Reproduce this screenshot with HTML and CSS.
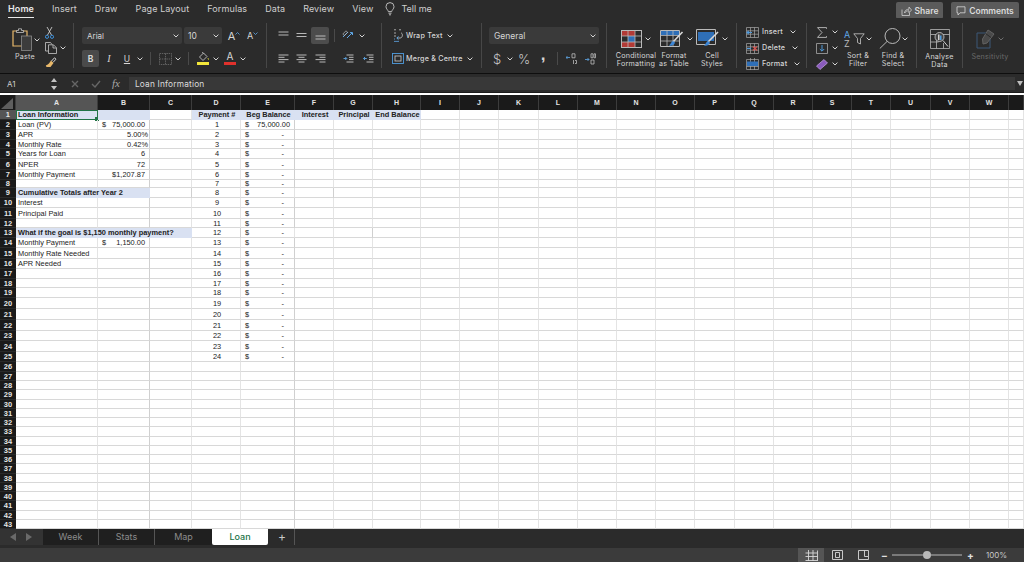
FILE: index.html
```html
<!DOCTYPE html>
<html lang="en">
<head>
<meta charset="utf-8">
<title>Loan</title>
<link rel="stylesheet" href="styles.css">
</head>
<body>
<svg class="defs" aria-hidden="true"><symbol id="chev" viewBox="0 0 6 4"><path d="M.6.6 3 3 5.4.6" fill="none" stroke="#d4d4d4" stroke-width="1"/></symbol></svg>

<header class="tabs">
  <nav class="tablist">
    <a class="tab on">Home</a><a class="tab">Insert</a><a class="tab">Draw</a><a class="tab">Page Layout</a><a class="tab">Formulas</a><a class="tab">Data</a><a class="tab">Review</a><a class="tab">View</a>
    <a class="tell"><svg width="10" height="14" viewBox="0 0 10 14" fill="none" stroke="#c8c8c8" stroke-width=".9"><path d="M3.3 9.6C3 7.8 1 7 1 4.6a4 4 0 0 1 8 0c0 2.400-2 3.200-2.300 5zM3.500 11.200h3M4 12.800h2"/></svg><span>Tell me</span></a>
  </nav>
  <div class="actions">
    <button class="act share"><svg width="11" height="10" viewBox="0 0 11 10" fill="none" stroke="#cfcfcf" stroke-width=".8"><path d="M1 3.500v6h7.500V7M3.500 7c.3-2.500 2-3.800 4.500-3.800V1l2.500 3-2.500 2.800V4.800C6 4.800 4.500 5.500 3.500 7z"/></svg>Share</button>
    <button class="act comments"><svg width="10" height="10" viewBox="0 0 10 10" fill="none" stroke="#d8d8d8" stroke-width=".8"><path d="M1 .8h8v6H4L2 9V6.800H1z"/></svg>Comments</button>
  </div>
</header>

<section class="ribbon">
  <div class="group g-clip">
    <div class="paste">
      <div class="paste-top">
        <svg width="20" height="23" viewBox="0 0 20 23" fill="none"><path d="M5 3H1v15h14" stroke="#e8b86a" stroke-width="1.200"/><path d="M11 3h4v5" stroke="#e8b86a" stroke-width="1.200"/><path d="M4.500 4.500V2.500H6.500V.8h3v1.700h2v2z" stroke="#c4c4c4" stroke-width=".8" fill="#2b2b2b"/><rect x="9.500" y="8" width="10" height="14.500" fill="#3c3c3c" stroke="#8a8a8a" stroke-width=".8"/></svg>
        <svg class="chev" viewBox="0 0 6 4"><use href="#chev"/></svg>
      </div>
      <span class="lbl">Paste</span>
    </div>
    <div class="clip-col">
      <div class="clip-row"><svg width="9" height="12" viewBox="0 0 9 12" fill="none"><path d="M2 0l4.500 8M7 0 2.500 8" stroke="#e0e0e0" stroke-width=".8"/><circle cx="2" cy="9.800" r="1.600" stroke="#3f8fd6"/><circle cx="7" cy="9.800" r="1.600" stroke="#3f8fd6"/></svg></div>
      <div class="clip-row"><svg width="12" height="12" viewBox="0 0 12 12" fill="none" stroke="#c8c8c8" stroke-width=".8"><path d="M3.500 9H.5V.5h5L7 2.500"/><path d="M3.500 2.800h5l3 3v5.700h-8zM8 3v3h3.300"/></svg><svg class="chev" viewBox="0 0 6 4"><use href="#chev"/></svg></div>
      <div class="clip-row"><svg width="12" height="11" viewBox="0 0 12 11" fill="none"><path d="M6.500 4 9.500.8l1.500 1.400-3 3.200" stroke="#d8d8d8"/><path d="M6 3.500 8.500 6 5.500 10H1.500L.8 8.500C3 8 4.500 6 6 3.500z" fill="#e8b86a"/></svg></div>
    </div>
  </div>

  <div class="group g-font">
    <div class="row">
      <div class="select w100"><span>Arial</span><svg class="chev" viewBox="0 0 6 4"><use href="#chev"/></svg></div>
      <div class="select w38"><span class="big">10</span><svg class="chev" viewBox="0 0 6 4"><use href="#chev"/></svg></div>
      <div class="tool w20 grow-a">A<svg class="tip" width="5" height="3" viewBox="0 0 5 3" fill="none" stroke="#5fa8e8" stroke-width=".8"><path d="M.5 2.500 2.500.5l2 2"/></svg></div>
      <div class="tool w17 shrink-a">A<svg class="tip" width="5" height="3" viewBox="0 0 5 3" fill="none" stroke="#5fa8e8" stroke-width=".8"><path d="M.5.5l2 2 2-2"/></svg></div>
    </div>
    <div class="row">
      <div class="tool w17 bold-b">B</div>
      <div class="tool w20 ital">I</div>
      <div class="tool w16 under">U</div>
      <div class="tool w10"><svg class="chev" viewBox="0 0 6 4"><use href="#chev"/></svg></div>
      <div class="tool w10"><i class="vsep"></i></div>
      <div class="tool w20"><svg width="13" height="12" viewBox="0 0 13 12" fill="none" stroke="#6e6e6e" stroke-width=".8" stroke-dasharray="1.500 .8"><path d="M.5.500h12v11H.5zM6.500.500v11M.5 6h12"/></svg></div>
      <div class="tool w6"><svg class="chev" viewBox="0 0 6 4"><use href="#chev"/></svg></div>
      <div class="tool w14"><i class="vsep"></i></div>
      <div class="tool w16 stack"><svg width="11" height="9" viewBox="0 0 11 9" fill="none" stroke="#d4d4d4" stroke-width=".8"><path d="M1.500 5 5.500 1 9 4.500 5 8.500zM5.500 1 4 0"/><path d="M9.800 6c.6.9.9 1.300.9 1.800" stroke="#e9e23a"/></svg><i class="bar yellow"></i></div>
      <div class="tool w10"><svg class="chev" viewBox="0 0 6 4"><use href="#chev"/></svg></div>
      <div class="tool w18 stack"><span class="font-a">A</span><i class="bar red"></i></div>
      <div class="tool w8"><svg class="chev" viewBox="0 0 6 4"><use href="#chev"/></svg></div>
    </div>
  </div>

  <div class="group g-align">
    <div class="row">
      <div class="tool w18"><svg class="al" viewBox="0 0 11 9"><path d="M.5 1h10M.5 4h10"/></svg></div>
      <div class="tool w18"><svg class="al" viewBox="0 0 11 9"><path d="M.5 2.500h10M.5 5.500h10"/></svg></div>
      <div class="tool w20"><span class="hl"><svg class="al" viewBox="0 0 11 9"><path d="M.5 5h10M.5 8h10"/></svg></span></div>
      <div class="tool w8"><i class="vsep"></i></div>
      <div class="tool w20"><svg width="12" height="11" viewBox="0 0 12 11" fill="none"><path d="M1 7 6 2" stroke="#5fa8e8"/><path d="M5 8l5-5M10.500 2.500 8 2.600M10.500 2.500V5" stroke="#5fa8e8"/><path d="M.8 4 4 .8l1.500 1.500L2.300 5.500z" stroke="#bdbdbd" stroke-width=".7"/></svg></div>
      <div class="tool w8"><svg class="chev" viewBox="0 0 6 4"><use href="#chev"/></svg></div>
    </div>
    <div class="row">
      <div class="tool w18"><svg class="al" viewBox="0 0 11 9"><path d="M.5 1h10M.5 3.300h6M.5 5.600h10M.5 8h6"/></svg></div>
      <div class="tool w18"><svg class="al" viewBox="0 0 11 9"><path d="M.5 1h10M2.500 3.300h6M.5 5.600h10M2.500 8h6"/></svg></div>
      <div class="tool w20"><svg class="al" viewBox="0 0 11 9"><path d="M.5 1h10M4.500 3.300h6M.5 5.600h10M4.500 8h6"/></svg></div>
      <div class="tool w8"></div>
      <div class="tool w20"><svg class="al" viewBox="0 0 11 9"><path d="M3.500 1h7M6 3.300h4.500M6 5.600h4.500M3.500 8h7"/><path d="M.5 4.500h3M2.300 3 3.800 4.500 2.300 6" stroke="#5fa8e8"/></svg></div>
      <div class="tool w20"><svg class="al" viewBox="0 0 11 9"><path d="M3.500 1h7M6 3.300h4.500M6 5.600h4.500M3.500 8h7"/><path d="M3.800 4.500h-3M2 3 .5 4.500 2 6" stroke="#5fa8e8"/></svg></div>
    </div>
  </div>

  <div class="group g-wrap">
    <div class="row">
      <div class="tool w16"><svg width="11" height="13" viewBox="0 0 11 13" fill="none" stroke="#c8c8c8" stroke-width=".8"><path d="M3 .8 1 .8M3 4H1M3 7H1M6 .8h2M8 4c2 0 2 5-1 5H4" /><path d="M5.500 7.500 3.800 9l1.700 1.700" stroke="#5fa8e8" stroke-width="1"/><path d="M1 10h1M1 12.400h5" stroke="#5fa8e8"/></svg></div>
      <span class="lbl mini">Wrap Text</span><svg class="chev tight" viewBox="0 0 6 4"><use href="#chev"/></svg>
    </div>
    <div class="row">
      <div class="tool w16"><svg width="12" height="11" viewBox="0 0 12 11" fill="none" stroke="#4f9bdc" stroke-width=".9"><rect x=".5" y=".5" width="11" height="10"/><rect x="3" y="3" width="6" height="5" stroke="#bdbdbd"/></svg></div>
      <span class="lbl mini">Merge &amp; Centre</span><svg class="chev tight" viewBox="0 0 6 4"><use href="#chev"/></svg>
    </div>
  </div>

  <div class="group g-num">
    <div class="row">
      <div class="select w110"><span class="big">General</span><svg class="chev" viewBox="0 0 6 4"><use href="#chev"/></svg></div>
    </div>
    <div class="row">
      <div class="tool w16 sym">$</div>
      <div class="tool w10"><svg class="chev" viewBox="0 0 6 4"><use href="#chev"/></svg></div>
      <div class="tool w18 sym">%</div>
      <div class="tool w20 sym comma">,</div>
      <div class="tool w8"><i class="vsep"></i></div>
      <div class="tool w20"><svg width="11" height="12" viewBox="0 0 11 12" fill="none" stroke="#bdbdbd" stroke-width=".8"><path d="M0 4.500h4M1.500 3 0 4.500 1.500 6" stroke="#5fa8e8"/><path d="M6 .8h3v4H6zM7.500 7v4M9 7.500h1.500v3H9"/></svg></div>
      <div class="tool w18"><svg width="11" height="12" viewBox="0 0 11 12" fill="none" stroke="#bdbdbd" stroke-width=".8"><path d="M0 6.500h4M2.500 5 4 6.500 2.500 8" stroke="#5fa8e8"/><path d="M6 .8h2v4H6zM9 .8h1.500v4H9zM6 7h3v4H6z"/></svg></div>
    </div>
  </div>

  <div class="group g-styles">
    <div class="big-item">
      <div class="big-ic"><svg width="21" height="18" viewBox="0 0 21 18"><rect x=".5" y=".5" width="20" height="17" fill="none" stroke="#b9b9b9"/><path d="M1 1h13v5H1zM1 12h13v5H1z" fill="#b23a36"/><path d="M7 6h7v6H7z" fill="#2f6fb7"/><path d="M7 .5v17M14 .5v17M.5 6h20M.5 12h20" stroke="#b9b9b9" stroke-width=".8"/></svg><svg class="chev" viewBox="0 0 6 4"><use href="#chev"/></svg></div>
      <span class="lbl">Conditional</span><span class="lbl">Formatting</span>
    </div>
    <div class="big-item">
      <div class="big-ic nudge"><svg width="24" height="18" viewBox="0 0 24 18"><path d="M.5.5h19v16H.5z" fill="none" stroke="#b9b9b9"/><path d="M1 1h18v4H1z" fill="#2f6fb7"/><path d="M7 .5v16M13 .5v16M.5 5.500h19M.5 11h19" stroke="#b9b9b9" stroke-width=".8"/><path d="M22.500 2 13 12" stroke="#d8d8d8" stroke-width="1.600"/><path d="M13 11c-2 .5-2 3-4 4.500 3 .8 5.500-.5 6-3z" fill="#3c86d6"/></svg><svg class="chev" viewBox="0 0 6 4"><use href="#chev"/></svg></div>
      <span class="lbl">Format</span><span class="lbl">as Table</span>
    </div>
    <div class="big-item">
      <div class="big-ic"><svg width="23" height="19" viewBox="0 0 23 19"><path d="M.5.5h19v15H.5z" fill="none" stroke="#b9b9b9"/><path d="M2 3h16v9H2z" fill="#2f6fb7"/><path d="M22 3 12 13" stroke="#d8d8d8" stroke-width="1.600"/><path d="M12 12c-2 .5-2 3-4 4.500 3 .8 5.500-.5 6-3z" fill="#3c86d6"/></svg><svg class="chev" viewBox="0 0 6 4"><use href="#chev"/></svg></div>
      <span class="lbl">Cell</span><span class="lbl">Styles</span>
    </div>
  </div>

  <div class="group g-cells">
    <div class="line"><svg width="13" height="11" viewBox="0 0 13 11" fill="none"><path d="M.5.500h12v10H.5zM4.500.500v10M8.500.500v10M.5 3.800h12M.5 7.200h12" stroke="#a8a8a8" stroke-width=".7"/><path d="M1 5.500h5M2.800 3.800 1 5.500l1.800 1.700" stroke="#4f9bdc" stroke-width="1.100"/></svg><span class="lbl mini">Insert</span><svg class="chev" viewBox="0 0 6 4"><use href="#chev"/></svg></div>
    <div class="line"><svg width="13" height="11" viewBox="0 0 13 11" fill="none"><path d="M.5.500h12v10H.5zM4.500.500v10M8.500.500v10M.5 3.800h12M.5 7.200h12" stroke="#a8a8a8" stroke-width=".7"/><path d="M7 3.500l4 4M11 3.500l-4 4" stroke="#d9534f" stroke-width="1.100"/><path d="M1 5.500h4" stroke="#4f9bdc" stroke-width="1.100"/></svg><span class="lbl mini">Delete</span><svg class="chev" viewBox="0 0 6 4"><use href="#chev"/></svg></div>
    <div class="line"><svg width="13" height="12" viewBox="0 0 13 12" fill="none"><path d="M.5 1.500h12v10H.5zM4.500 0v12M8.500 0v12M.5 8.500h12" stroke="#a8a8a8" stroke-width=".7"/><path d="M1 3.500h11v4.500H1z" fill="#2f6fb7"/></svg><span class="lbl mini">Format</span><svg class="chev" viewBox="0 0 6 4"><use href="#chev"/></svg></div>
  </div>

  <div class="group g-edit">
    <div class="edit-col">
      <div class="line"><svg width="11" height="11" viewBox="0 0 11 11" fill="none" stroke="#bdbdbd" stroke-width=".9"><path d="M10 1.800V.6H1l4.500 4.900L1 10.400h9V9.200"/></svg><svg class="chev" viewBox="0 0 6 4"><use href="#chev"/></svg></div>
      <div class="line"><svg width="12" height="11" viewBox="0 0 12 11" fill="none"><path d="M.5.500h11v10H.5z" stroke="#a8a8a8" stroke-width=".8"/><path d="M6 2v6M3.800 6 6 8.200 8.200 6" stroke="#4f9bdc"/></svg><svg class="chev" viewBox="0 0 6 4"><use href="#chev"/></svg></div>
      <div class="line"><svg width="12" height="11" viewBox="0 0 12 11"><path d="M8 .5 11.500 4 4 10.500.5 7z" fill="#8a5bbd" stroke="#c9a8e8" stroke-width=".7"/></svg><svg class="chev" viewBox="0 0 6 4"><use href="#chev"/></svg></div>
    </div>
    <div class="big-item w34">
      <div class="big-ic"><span class="az"><b>A</b><span>Z</span></span><svg width="12" height="12" viewBox="0 0 12 12" fill="none" stroke="#c8c8c8" stroke-width=".8"><path d="M.8.800h10.400L7.500 5.500V11l-3-1.500v-4z"/></svg><svg class="chev" viewBox="0 0 6 4"><use href="#chev"/></svg></div>
      <span class="lbl">Sort &amp;</span><span class="lbl">Filter</span>
    </div>
    <div class="big-item w34">
      <div class="big-ic"><svg width="22" height="21" viewBox="0 0 22 21" fill="none" stroke="#c8c8c8" stroke-width=".9"><circle cx="13.500" cy="8" r="7.500"/><path d="M8 13.500.8 20.500"/></svg><svg class="chev" viewBox="0 0 6 4"><use href="#chev"/></svg></div>
      <span class="lbl">Find &amp;</span><span class="lbl">Select</span>
    </div>
  </div>

  <div class="group g-analyse">
    <div class="big-item">
      <div class="big-ic"><svg width="20" height="20" viewBox="0 0 20 20" fill="none"><path d="M.5.500h19v19H.5zM.5 5.500h19M6.500 5.500v14M13.500 14v5.500M.5 13h8" stroke="#b9b9b9" stroke-width=".8"/><circle cx="9.500" cy="8" r="4.500" fill="#444" stroke="#d0d0d0" stroke-width=".8"/><path d="M8 5.500h1.500V11H8z" fill="#d0d0d0"/><path d="M10 6.500h1.500V11H10z" fill="#4f9bdc"/><path d="m13 11.500 5 6" stroke="#d0d0d0"/></svg></div>
      <span class="lbl">Analyse</span><span class="lbl">Data</span>
    </div>
  </div>

  <div class="group g-sens">
    <div class="big-item">
      <div class="big-ic"><svg width="19" height="20" viewBox="0 0 19 20" fill="none"><path d="M11 4H1v15h13v-9" stroke="#3c5878"/><path d="M12 1l6 4-7 9-4 1-.5-5z" fill="#4a4a4a" stroke="#636363"/><path d="M9.500 4.500l5.500 4" stroke="#2b2b2b"/></svg><svg class="chev dim" viewBox="0 0 6 4"><use href="#chev"/></svg></div>
      <span class="lbl muted">Sensitivity</span>
    </div>
  </div>
</section>

<section class="formula">
  <div class="namebox">A1</div>
  <div class="stepper"><svg width="6" height="12" viewBox="0 0 6 12" fill="#c4c4c4"><path d="M3 0l3 4H0zM3 12 0 8h6z"/></svg></div>
  <div class="fbtn x"><svg width="8" height="8" viewBox="0 0 8 8" stroke="#666" stroke-width="1.400"><path d="M1 1l6 6M7 1 1 7"/></svg></div>
  <div class="fbtn"><svg width="10" height="8" viewBox="0 0 10 8" fill="none" stroke="#666" stroke-width="1.400"><path d="M1 4l3 3 5-6"/></svg></div>
  <div class="fx">fx</div>
  <div class="finput">Loan Information</div>
  <div class="fdrop"><svg width="6" height="5" viewBox="0 0 6 5" fill="#bdbdbd"><path d="M0 0h6L3 5z"/></svg></div>
</section>

<main class="sheet">
<table class="grid">
<colgroup><col class="c16"><col class="c82"><col class="c52"><col class="c42"><col class="c49"><col class="c54"><col class="c39"><col class="c39"><col class="c48"><col class="c39"><col class="c39"><col class="c40"><col class="c39"><col class="c39"><col class="c39"><col class="c39"><col class="c40"><col class="c39"><col class="c39"><col class="c39"><col class="c39"><col class="c40"><col class="c39"><col class="c39"><col class="c15"></colgroup>
<thead><tr><th class="corner"><svg width="14" height="13" viewBox="0 0 14 13"><path d="M13 1v11H1z" fill="#5e5e5e"/></svg></th><th class="cur">A</th><th>B</th><th>C</th><th>D</th><th>E</th><th>F</th><th>G</th><th>H</th><th>I</th><th>J</th><th>K</th><th>L</th><th>M</th><th>N</th><th>O</th><th>P</th><th>Q</th><th>R</th><th>S</th><th>T</th><th>U</th><th>V</th><th>W</th><th></th></tr></thead>
<tbody>
<tr class="h10"><th class="cur">1</th><td class="sel hd b">Loan Information</td><td class="hd"></td><td></td><td class="hd b ctr">Payment #</td><td class="hd b ctr">Beg Balance</td><td class="hd b ctr">Interest</td><td class="hd b ctr">Principal</td><td class="hd b ctr">End Balance</td><td></td><td></td><td></td><td></td><td></td><td></td><td></td><td></td><td></td><td></td><td></td><td></td><td></td><td></td><td></td><td></td></tr>
<tr class="h10"><th>2</th><td>Loan (PV)</td><td class="num"><span class="dl">$</span>75,000.00</td><td></td><td class="ctr">1</td><td class="num"><span class="dl">$</span>75,000.00</td><td></td><td></td><td></td><td></td><td></td><td></td><td></td><td></td><td></td><td></td><td></td><td></td><td></td><td></td><td></td><td></td><td></td><td></td><td></td></tr>
<tr class="h10"><th>3</th><td>APR</td><td class="pct">5.00%</td><td></td><td class="ctr">2</td><td class="num"><span class="dl">$</span><span class="dash">-</span></td><td></td><td></td><td></td><td></td><td></td><td></td><td></td><td></td><td></td><td></td><td></td><td></td><td></td><td></td><td></td><td></td><td></td><td></td><td></td></tr>
<tr class="h9"><th>4</th><td>Monthly Rate</td><td class="pct">0.42%</td><td></td><td class="ctr">3</td><td class="num"><span class="dl">$</span><span class="dash">-</span></td><td></td><td></td><td></td><td></td><td></td><td></td><td></td><td></td><td></td><td></td><td></td><td></td><td></td><td></td><td></td><td></td><td></td><td></td><td></td></tr>
<tr class="h10"><th>5</th><td>Years for Loan</td><td class="num">6</td><td></td><td class="ctr">4</td><td class="num"><span class="dl">$</span><span class="dash">-</span></td><td></td><td></td><td></td><td></td><td></td><td></td><td></td><td></td><td></td><td></td><td></td><td></td><td></td><td></td><td></td><td></td><td></td><td></td><td></td></tr>
<tr class="h11"><th>6</th><td>NPER</td><td class="num">72</td><td></td><td class="ctr">5</td><td class="num"><span class="dl">$</span><span class="dash">-</span></td><td></td><td></td><td></td><td></td><td></td><td></td><td></td><td></td><td></td><td></td><td></td><td></td><td></td><td></td><td></td><td></td><td></td><td></td><td></td></tr>
<tr class="h10"><th>7</th><td>Monthly Payment</td><td class="num">$1,207.87</td><td></td><td class="ctr">6</td><td class="num"><span class="dl">$</span><span class="dash">-</span></td><td></td><td></td><td></td><td></td><td></td><td></td><td></td><td></td><td></td><td></td><td></td><td></td><td></td><td></td><td></td><td></td><td></td><td></td><td></td></tr>
<tr class="h8"><th>8</th><td></td><td></td><td></td><td class="ctr">7</td><td class="num"><span class="dl">$</span><span class="dash">-</span></td><td></td><td></td><td></td><td></td><td></td><td></td><td></td><td></td><td></td><td></td><td></td><td></td><td></td><td></td><td></td><td></td><td></td><td></td><td></td></tr>
<tr class="h10"><th>9</th><td class="hd b" colspan="2">Cumulative Totals after Year 2</td><td></td><td class="ctr">8</td><td class="num"><span class="dl">$</span><span class="dash">-</span></td><td></td><td></td><td></td><td></td><td></td><td></td><td></td><td></td><td></td><td></td><td></td><td></td><td></td><td></td><td></td><td></td><td></td><td></td><td></td></tr>
<tr class="h10"><th>10</th><td>Interest</td><td></td><td></td><td class="ctr">9</td><td class="num"><span class="dl">$</span><span class="dash">-</span></td><td></td><td></td><td></td><td></td><td></td><td></td><td></td><td></td><td></td><td></td><td></td><td></td><td></td><td></td><td></td><td></td><td></td><td></td><td></td></tr>
<tr class="h11"><th>11</th><td>Principal Paid</td><td></td><td></td><td class="ctr">10</td><td class="num"><span class="dl">$</span><span class="dash">-</span></td><td></td><td></td><td></td><td></td><td></td><td></td><td></td><td></td><td></td><td></td><td></td><td></td><td></td><td></td><td></td><td></td><td></td><td></td><td></td></tr>
<tr class="h9"><th>12</th><td></td><td></td><td></td><td class="ctr">11</td><td class="num"><span class="dl">$</span><span class="dash">-</span></td><td></td><td></td><td></td><td></td><td></td><td></td><td></td><td></td><td></td><td></td><td></td><td></td><td></td><td></td><td></td><td></td><td></td><td></td><td></td></tr>
<tr class="h10"><th>13</th><td class="hd b" colspan="3">What if the goal is $1,150 monthly payment?</td><td class="ctr">12</td><td class="num"><span class="dl">$</span><span class="dash">-</span></td><td></td><td></td><td></td><td></td><td></td><td></td><td></td><td></td><td></td><td></td><td></td><td></td><td></td><td></td><td></td><td></td><td></td><td></td><td></td></tr>
<tr class="h10"><th>14</th><td>Monthly Payment</td><td class="num"><span class="dl">$</span>1,150.00</td><td></td><td class="ctr">13</td><td class="num"><span class="dl">$</span><span class="dash">-</span></td><td></td><td></td><td></td><td></td><td></td><td></td><td></td><td></td><td></td><td></td><td></td><td></td><td></td><td></td><td></td><td></td><td></td><td></td><td></td></tr>
<tr class="h11"><th>15</th><td>Monthly Rate Needed</td><td></td><td></td><td class="ctr">14</td><td class="num"><span class="dl">$</span><span class="dash">-</span></td><td></td><td></td><td></td><td></td><td></td><td></td><td></td><td></td><td></td><td></td><td></td><td></td><td></td><td></td><td></td><td></td><td></td><td></td><td></td></tr>
<tr class="h10"><th>16</th><td>APR Needed</td><td></td><td></td><td class="ctr">15</td><td class="num"><span class="dl">$</span><span class="dash">-</span></td><td></td><td></td><td></td><td></td><td></td><td></td><td></td><td></td><td></td><td></td><td></td><td></td><td></td><td></td><td></td><td></td><td></td><td></td><td></td></tr>
<tr class="h10"><th>17</th><td></td><td></td><td></td><td class="ctr">16</td><td class="num"><span class="dl">$</span><span class="dash">-</span></td><td></td><td></td><td></td><td></td><td></td><td></td><td></td><td></td><td></td><td></td><td></td><td></td><td></td><td></td><td></td><td></td><td></td><td></td><td></td></tr>
<tr class="h9"><th>18</th><td></td><td></td><td></td><td class="ctr">17</td><td class="num"><span class="dl">$</span><span class="dash">-</span></td><td></td><td></td><td></td><td></td><td></td><td></td><td></td><td></td><td></td><td></td><td></td><td></td><td></td><td></td><td></td><td></td><td></td><td></td><td></td></tr>
<tr class="h10"><th>19</th><td></td><td></td><td></td><td class="ctr">18</td><td class="num"><span class="dl">$</span><span class="dash">-</span></td><td></td><td></td><td></td><td></td><td></td><td></td><td></td><td></td><td></td><td></td><td></td><td></td><td></td><td></td><td></td><td></td><td></td><td></td><td></td></tr>
<tr class="h11"><th>20</th><td></td><td></td><td></td><td class="ctr">19</td><td class="num"><span class="dl">$</span><span class="dash">-</span></td><td></td><td></td><td></td><td></td><td></td><td></td><td></td><td></td><td></td><td></td><td></td><td></td><td></td><td></td><td></td><td></td><td></td><td></td><td></td></tr>
<tr class="h11"><th>21</th><td></td><td></td><td></td><td class="ctr">20</td><td class="num"><span class="dl">$</span><span class="dash">-</span></td><td></td><td></td><td></td><td></td><td></td><td></td><td></td><td></td><td></td><td></td><td></td><td></td><td></td><td></td><td></td><td></td><td></td><td></td><td></td></tr>
<tr class="h11"><th>22</th><td></td><td></td><td></td><td class="ctr">21</td><td class="num"><span class="dl">$</span><span class="dash">-</span></td><td></td><td></td><td></td><td></td><td></td><td></td><td></td><td></td><td></td><td></td><td></td><td></td><td></td><td></td><td></td><td></td><td></td><td></td><td></td></tr>
<tr class="h10"><th>23</th><td></td><td></td><td></td><td class="ctr">22</td><td class="num"><span class="dl">$</span><span class="dash">-</span></td><td></td><td></td><td></td><td></td><td></td><td></td><td></td><td></td><td></td><td></td><td></td><td></td><td></td><td></td><td></td><td></td><td></td><td></td><td></td></tr>
<tr class="h11"><th>24</th><td></td><td></td><td></td><td class="ctr">23</td><td class="num"><span class="dl">$</span><span class="dash">-</span></td><td></td><td></td><td></td><td></td><td></td><td></td><td></td><td></td><td></td><td></td><td></td><td></td><td></td><td></td><td></td><td></td><td></td><td></td><td></td></tr>
<tr class="h10"><th>25</th><td></td><td></td><td></td><td class="ctr">24</td><td class="num"><span class="dl">$</span><span class="dash">-</span></td><td></td><td></td><td></td><td></td><td></td><td></td><td></td><td></td><td></td><td></td><td></td><td></td><td></td><td></td><td></td><td></td><td></td><td></td><td></td></tr>
<tr class="h10"><th>26</th><td></td><td></td><td></td><td></td><td></td><td></td><td></td><td></td><td></td><td></td><td></td><td></td><td></td><td></td><td></td><td></td><td></td><td></td><td></td><td></td><td></td><td></td><td></td><td></td></tr>
<tr class="h9"><th>27</th><td></td><td></td><td></td><td></td><td></td><td></td><td></td><td></td><td></td><td></td><td></td><td></td><td></td><td></td><td></td><td></td><td></td><td></td><td></td><td></td><td></td><td></td><td></td><td></td></tr>
<tr class="h9"><th>28</th><td></td><td></td><td></td><td></td><td></td><td></td><td></td><td></td><td></td><td></td><td></td><td></td><td></td><td></td><td></td><td></td><td></td><td></td><td></td><td></td><td></td><td></td><td></td><td></td></tr>
<tr class="h10"><th>29</th><td></td><td></td><td></td><td></td><td></td><td></td><td></td><td></td><td></td><td></td><td></td><td></td><td></td><td></td><td></td><td></td><td></td><td></td><td></td><td></td><td></td><td></td><td></td><td></td></tr>
<tr class="h9"><th>30</th><td></td><td></td><td></td><td></td><td></td><td></td><td></td><td></td><td></td><td></td><td></td><td></td><td></td><td></td><td></td><td></td><td></td><td></td><td></td><td></td><td></td><td></td><td></td><td></td></tr>
<tr class="h9"><th>31</th><td></td><td></td><td></td><td></td><td></td><td></td><td></td><td></td><td></td><td></td><td></td><td></td><td></td><td></td><td></td><td></td><td></td><td></td><td></td><td></td><td></td><td></td><td></td><td></td></tr>
<tr class="h9"><th>32</th><td></td><td></td><td></td><td></td><td></td><td></td><td></td><td></td><td></td><td></td><td></td><td></td><td></td><td></td><td></td><td></td><td></td><td></td><td></td><td></td><td></td><td></td><td></td><td></td></tr>
<tr class="h10"><th>33</th><td></td><td></td><td></td><td></td><td></td><td></td><td></td><td></td><td></td><td></td><td></td><td></td><td></td><td></td><td></td><td></td><td></td><td></td><td></td><td></td><td></td><td></td><td></td><td></td></tr>
<tr class="h9"><th>34</th><td></td><td></td><td></td><td></td><td></td><td></td><td></td><td></td><td></td><td></td><td></td><td></td><td></td><td></td><td></td><td></td><td></td><td></td><td></td><td></td><td></td><td></td><td></td><td></td></tr>
<tr class="h9"><th>35</th><td></td><td></td><td></td><td></td><td></td><td></td><td></td><td></td><td></td><td></td><td></td><td></td><td></td><td></td><td></td><td></td><td></td><td></td><td></td><td></td><td></td><td></td><td></td><td></td></tr>
<tr class="h9"><th>36</th><td></td><td></td><td></td><td></td><td></td><td></td><td></td><td></td><td></td><td></td><td></td><td></td><td></td><td></td><td></td><td></td><td></td><td></td><td></td><td></td><td></td><td></td><td></td><td></td></tr>
<tr class="h10"><th>37</th><td></td><td></td><td></td><td></td><td></td><td></td><td></td><td></td><td></td><td></td><td></td><td></td><td></td><td></td><td></td><td></td><td></td><td></td><td></td><td></td><td></td><td></td><td></td><td></td></tr>
<tr class="h9"><th>38</th><td></td><td></td><td></td><td></td><td></td><td></td><td></td><td></td><td></td><td></td><td></td><td></td><td></td><td></td><td></td><td></td><td></td><td></td><td></td><td></td><td></td><td></td><td></td><td></td></tr>
<tr class="h9"><th>39</th><td></td><td></td><td></td><td></td><td></td><td></td><td></td><td></td><td></td><td></td><td></td><td></td><td></td><td></td><td></td><td></td><td></td><td></td><td></td><td></td><td></td><td></td><td></td><td></td></tr>
<tr class="h9"><th>40</th><td></td><td></td><td></td><td></td><td></td><td></td><td></td><td></td><td></td><td></td><td></td><td></td><td></td><td></td><td></td><td></td><td></td><td></td><td></td><td></td><td></td><td></td><td></td><td></td></tr>
<tr class="h10"><th>41</th><td></td><td></td><td></td><td></td><td></td><td></td><td></td><td></td><td></td><td></td><td></td><td></td><td></td><td></td><td></td><td></td><td></td><td></td><td></td><td></td><td></td><td></td><td></td><td></td></tr>
<tr class="h9"><th>42</th><td></td><td></td><td></td><td></td><td></td><td></td><td></td><td></td><td></td><td></td><td></td><td></td><td></td><td></td><td></td><td></td><td></td><td></td><td></td><td></td><td></td><td></td><td></td><td></td></tr>
<tr class="h9"><th>43</th><td></td><td></td><td></td><td></td><td></td><td></td><td></td><td></td><td></td><td></td><td></td><td></td><td></td><td></td><td></td><td></td><td></td><td></td><td></td><td></td><td></td><td></td><td></td><td></td></tr>
</tbody>
</table>
</main>

<section class="sheetbar">
  <div class="sheetnav"><svg width="6" height="8" viewBox="0 0 6 8" fill="#6a6a6a"><path d="M6 0v8L0 4z"/></svg><svg width="6" height="8" viewBox="0 0 6 8" fill="#6a6a6a"><path d="M0 0v8l6-4z"/></svg></div>
  <div class="stab">Week</div><div class="stab">Stats</div><div class="stab">Map</div><div class="stab active">Loan</div><div class="stab add">+</div>
</section>

<footer class="status">
  <div class="view on"><svg width="13" height="11" viewBox="0 0 13 11" fill="none" stroke="#d8d8d8" stroke-width=".9"><path d="M3.500 0v11M8 0v11M12.500.500v10.500M.5 3h12M.5 6.500h12M.5 10.500h12"/></svg></div>
  <div class="view"><svg width="11" height="10" viewBox="0 0 11 10" fill="none" stroke="#d8d8d8" stroke-width=".9"><path d="M.5.500h10v9H.5zM3.500 2.500h4v5h-4z"/></svg></div>
  <div class="view"><svg width="11" height="10" viewBox="0 0 11 10" fill="none" stroke="#d8d8d8" stroke-width=".9"><path d="M.5 9.500V.5h10v6H6.500V.5M.5 9.500h10V6.500"/></svg></div>
  <div class="zoom">
    <span class="zbtn">−</span>
    <div class="slider"><i class="track lit"></i><i class="knob"></i><i class="track"></i></div>
    <span class="zbtn">+</span>
    <span class="pc">100%</span>
  </div>
</footer>
</body>
</html>
```

FILE: styles.css
```css
* { box-sizing: border-box; }
html, body { margin: 0; height: 100%; }
body {
  width: 1024px; height: 562px; overflow: hidden;
  display: flex; flex-direction: column;
  background: #2b2b2b; color: #d6d6d6;
  font-family: Inter, "Liberation Sans", Arial, sans-serif;
}
.defs { width: 0; height: 0; position: absolute; }

/* top tabs */
.tabs { height: 18px; flex: none; display: flex; align-items: flex-start; padding: 0 5px 0 8px; background: #2b2b2b; }
.tablist { display: flex; gap: 18px; height: 18px; }
.tab { font-size: 9px; line-height: 17px; height: 18px; color: #cfcfcf; white-space: nowrap; letter-spacing: .1px; }
.tab.on { color: #e8e8e8; font-weight: 600; border-bottom: 1px solid #e8e8e8; }
.tell { display: flex; align-items: center; gap: 6px; font-size: 9px; height: 17px; color: #cfcfcf; margin-left: -6px; }
.actions { margin-left: auto; display: flex; gap: 8px; padding-top: 2px; }
.act { height: 17px; border: 0; border-radius: 2px; background: #5b5b5b; color: #dcdcdc; font: 600 8.500px Inter, "Liberation Sans", sans-serif; display: flex; align-items: center; justify-content: center; gap: 3px; padding: 0; }
.share { width: 47px; }
.comments { width: 68px; }

/* ribbon */
.ribbon { height: 56px; flex: none; display: flex; padding: 5px 0 0; background: #2b2b2b; border-bottom: 1px solid #0e0e0e; }
.group { height: 45px; flex: none; border-right: 1px solid #474747; }
.g-clip { width: 74px; display: flex; }
.g-font { width: 193px; padding: 4px 0 0 8px; }
.g-align { width: 115px; padding: 4px 0 0 7px; }
.g-wrap { width: 100px; padding: 4px 0 0 8px; }
.g-num { width: 125px; padding: 4px 0 0 7px; }
.g-styles { width: 130px; padding-left: 11px; display: flex; gap: 2px; }
.g-cells { width: 70px; padding: 1px 0 0 9px; }
.g-edit { width: 110px; padding: 0 0 0 9px; display: flex; gap: 1px; }
.g-analyse { width: 46px; }
.g-sens { width: 61px; border-right: 0; padding-right: 7px; }
.row { display: flex; align-items: center; height: 17px; margin-bottom: 6px; }
.line { display: flex; align-items: center; height: 16px; gap: 3px; }
.line .chev { margin-left: 4px; }
.edit-col { width: 24px; padding-top: 1px; }
.edit-col .line { gap: 0; }
.edit-col .line svg:first-child { width: 12px; flex: none; }
.lbl { font-size: 7.200px; line-height: 8px; color: #d6d6d6; white-space: nowrap; letter-spacing: .2px; }
.lbl.mini { font-weight: 500; }
.muted { color: #6a6a6a; }
.chev { width: 6px; height: 4px; flex: none; }
.chev.tight { margin-left: 4px; }
.chev.dim { opacity: .4; }
.tool { height: 17px; display: flex; align-items: center; justify-content: center; flex: none; font-size: 9px; color: #d6d6d6; }
.w6 { width: 6px; } .w8 { width: 8px; } .w10 { width: 10px; } .w14 { width: 14px; } .w16 { width: 16px; }
.w17 { width: 17px; } .w18 { width: 18px; } .w20 { width: 20px; }
.w38 { width: 38px; } .w100 { width: 100px; } .w110 { width: 110px; }
.select { height: 17px; background: #3a3a3a; border-radius: 2px; display: flex; align-items: center; justify-content: space-between; padding: 0 3px 0 5px; font-size: 8px; flex: none; margin-right: 2px; }
.select .big { font-size: 8.500px; }
.select.w38 { padding-left: 4px; }
.grow-a { font-size: 11px; }
.shrink-a { font-size: 9px; }
.tip { margin: -5px 0 0 0; }
.bold-b { background: #4a4a4a; border-radius: 2px; font-weight: 700; font-size: 8.500px; }
.ital { font-family: "Liberation Serif", serif; font-style: italic; font-size: 10px; }
.under { text-decoration: underline; font-size: 8.500px; }
.vsep { width: 1px; height: 13px; background: #4a4a4a; display: block; }
.stack { flex-direction: column; gap: 0; }
.font-a { font-size: 10px; line-height: 9px; }
.bar { display: block; width: 12px; height: 3px; margin-top: 1px; }
.yellow { background: #f2e63a; }
.red { background: #e0312c; }
.al { width: 11px; height: 9px; fill: none; stroke: #c8c8c8; stroke-width: .9; }
.hl { width: 18px; height: 17px; background: #4c4c4c; border-radius: 2px; display: flex; align-items: center; justify-content: center; }
.sym { font-size: 13px; font-weight: 300; color: #c4c4c4; }
.comma { font-weight: 700; font-size: 17px; font-family: "Liberation Sans", sans-serif; padding-bottom: 8px; color: #d6d6d6; }

/* clipboard */
.paste { width: 43px; padding: 4px 0 0 12px; }
.paste-top { display: flex; align-items: center; gap: 2px; height: 25px; }
.paste .lbl { display: block; padding-left: 3px; line-height: 10px; }
.clip-col { padding: 2px 0 0 2px; }
.clip-row { height: 15px; display: flex; align-items: center; gap: 3px; }

/* large buttons */
.big-item { width: 36px; display: flex; flex-direction: column; align-items: center; }
.big-item.w34 { width: 34px; }
.g-analyse .big-item { width: 45px; }
.g-sens .big-item { width: 54px; }
.big-ic { height: 30px; padding-top: 2px; display: flex; align-items: center; gap: 3px; }
.big-ic.nudge { padding-left: 4px; }
.az { display: flex; flex-direction: column; font-size: 9px; line-height: 9px; width: 8px; color: #bdbdbd; }
.az b { color: #5fa8e8; font-weight: 400; }
.g-edit .big-ic { gap: 1px; }

/* formula bar */
.formula { height: 19px; flex: none; display: flex; padding-top: 3px; background: #2b2b2b; border-bottom: 1px solid #1b1b1b; }
.namebox { width: 46px; height: 13px; padding-left: 7px; font-size: 8px; line-height: 14px; color: #cfcfcf; }
.stepper { width: 19px; height: 13px; display: flex; justify-content: center; align-items: center; padding-right: 3px; }
.fbtn { width: 21px; height: 13px; display: flex; align-items: center; justify-content: center; }
.fx { width: 22px; height: 13px; font: italic 11px/13px "Liberation Serif", serif; color: #a8a8a8; padding-left: 5px; }
.finput { width: 887px; height: 13px; background: #383838; font-size: 8.300px; line-height: 14px; padding-left: 6px; color: #dcdcdc; letter-spacing: .2px; }
.fdrop { width: 9px; height: 13px; display: flex; align-items: center; justify-content: center; }

/* grid */
.sheet { height: 436px; flex: none; overflow: hidden; background: #fff; border-top: 2px solid #fff; }
.grid { table-layout: fixed; width: 1024px; border-spacing: 0; border-collapse: separate; font: 7.400px/7px "Liberation Sans", Arial, sans-serif; color: #222; opacity: .999; }
.c16 { width: 16px; } .c82 { width: 82px; } .c52 { width: 52px; } .c42 { width: 42px; } .c49 { width: 49px; } .c54 { width: 54px; }
.c39 { width: 39px; } .c40 { width: 40px; } .c48 { width: 48px; } .c15 { width: 15px; }
.grid th { padding: 0; background: #1a1a1a; color: #e4e4e4; font-weight: 700; text-align: center; white-space: nowrap; }
thead th { height: 15px; font-size: 7px; border-right: 1px solid #3c3c3c; }
thead th.cur { background: #555; }
.corner { background: #1a1a1a; vertical-align: bottom; }
.corner svg { display: block; }
tbody th { border-bottom: 1px solid #2a2a2a; font-size: 7.500px; letter-spacing: .1px; }
tbody th.cur { background: #555; }
.grid td { padding: 0 0 0 2px; border-right: 1px solid #e4e4e4; border-bottom: 1px solid #d8d8d8; white-space: nowrap; overflow: visible; position: relative; }
.grid td:nth-child(3), .grid td:nth-child(6) { border-right-color: #d0d0d0; }
.h8 td, .h8 th { height: 8px; } .h9 td, .h9 th { height: 9px; } .h10 td, .h10 th { height: 10px; } .h11 td, .h11 th { height: 11px; }
.hd { background: #d9e1f2; }
.grid td.hd { border-color: #d9e1f2; }
.b { font-weight: 700; }
.ctr { text-align: center; }
.grid td.num { text-align: right; padding-right: 4px; }
.grid td.pct { text-align: right; padding-right: 1px; }
.dl { float: left; padding-left: 2px; }
.dash { padding-right: 6px; }
.grid td.sel { outline: 1px solid #217346; outline-offset: -1px; padding-left: 2px; }
.sel::after { content: ""; position: absolute; right: -2px; bottom: -2px; width: 4px; height: 4px; background: #217346; }

/* sheet tabs */
.sheetbar { height: 19px; flex: none; display: flex; background: #2b2b2b; align-items: flex-start; }
.sheetnav { width: 43px; height: 16px; background: #333; display: flex; align-items: center; justify-content: center; gap: 10px; padding-right: 2px; }
.stab { width: 56px; height: 16px; background: #1f1f1f; border-right: 1px solid #555; color: #8c8c8c; font-size: 9px; line-height: 16px; text-align: center; }
.stab:nth-child(4) { width: 57px; border-right: 0; }
.stab.active { background: #fff; color: #217346; font-weight: 500; border-right: 0; border-radius: 0 0 2px 2px; }
.stab.add { width: 27px; background: #2b2b2b; color: #c8c8c8; font-size: 12px; padding-left: 2px; }

/* status bar */
.status { height: 14px; flex: none; background: #3b3b3b; display: flex; justify-content: flex-end; align-items: center; }
.view { width: 26px; height: 14px; display: flex; align-items: center; justify-content: center; }
.view.on { background: #555; }
.zoom { display: flex; align-items: center; width: 148px; padding-left: 5px; }
.zbtn { width: 7px; font-size: 10px; line-height: 10px; font-weight: 700; color: #e0e0e0; text-align: center; }
.slider { width: 70px; display: flex; align-items: center; margin: 0 5px 0 4px; }
.track { height: 2px; background: #7a7a7a; flex: 1; display: block; }
.knob { width: 8px; height: 8px; border-radius: 50%; background: #b9b9b9; display: block; }
.slider .lit { flex: none; width: 31px; }
.pc { font-size: 8px; color: #c8c8c8; margin-left: 12px; }
```
